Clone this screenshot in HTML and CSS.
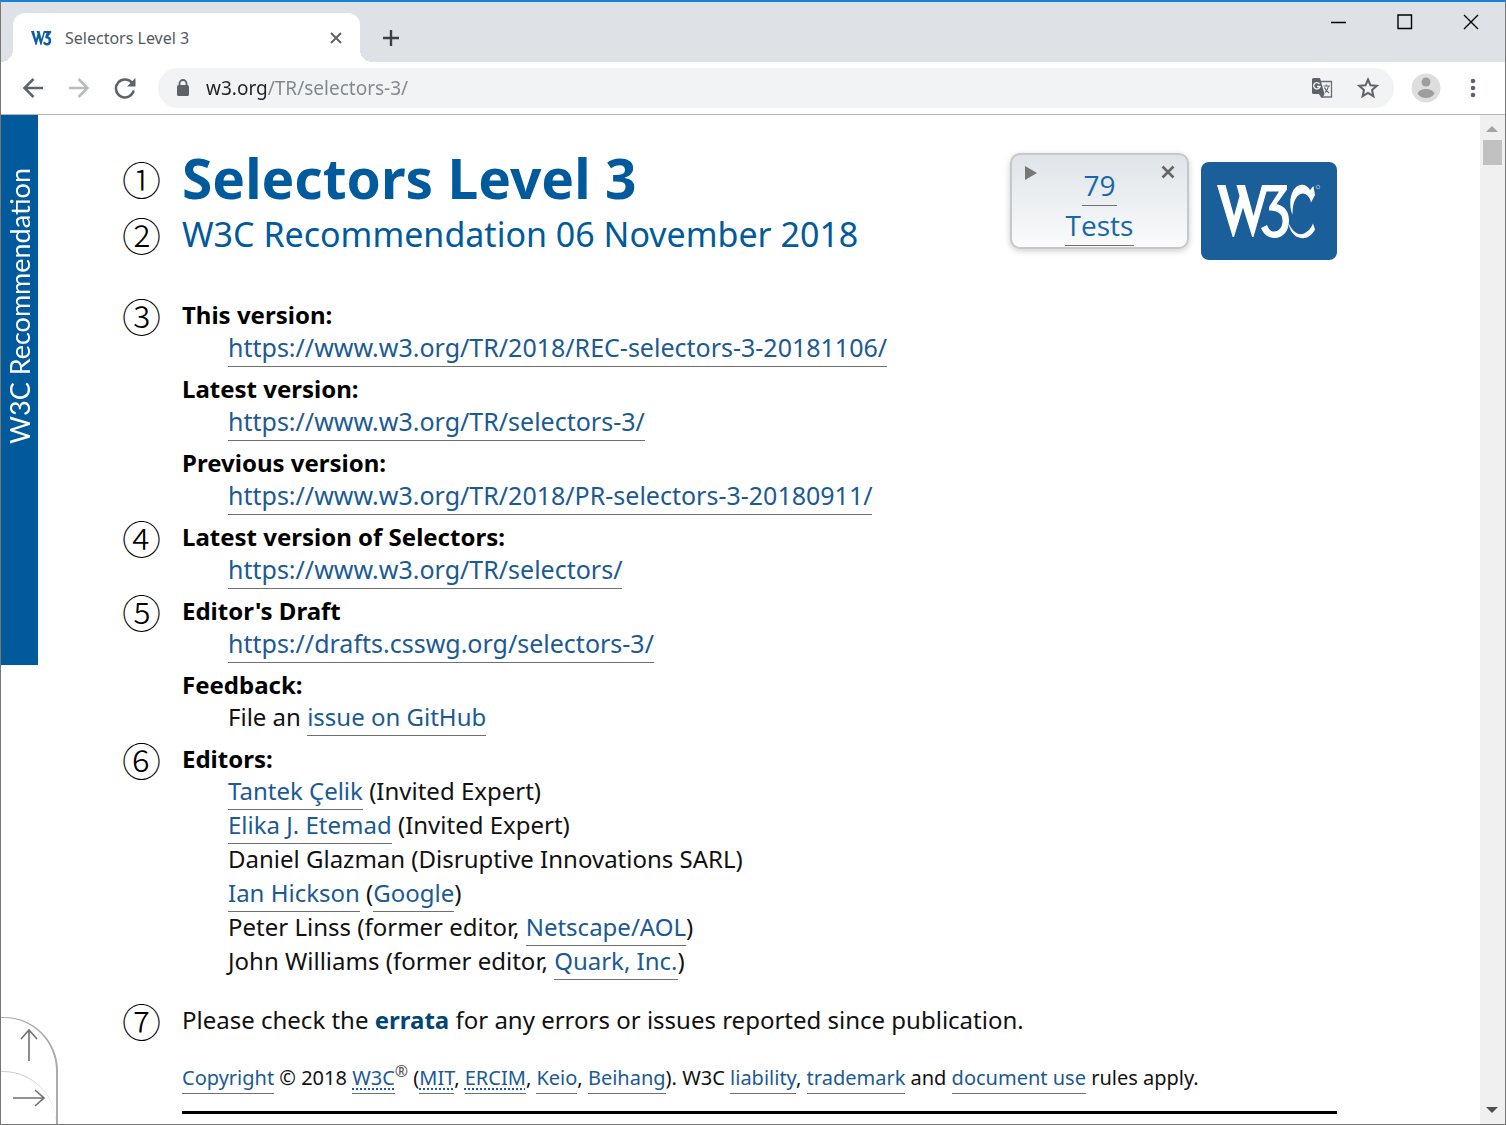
FILE: index.html
```html
<!DOCTYPE html>
<html lang="en">
<head>
<meta charset="utf-8">
<title>Selectors Level 3</title>
<link rel="stylesheet" href="styles.css">
</head>
<body>
<div class="window">
  <div class="titlebar">
    <div class="tab">
      <svg class="favicon" viewBox="0 0 22 16" width="22" height="16" aria-hidden="true"><path d="M0 1h3l2 8 1.500-5L5.500 1h3l2 8 2.200-8h7.500v1.500l-3 4c2 .6 3 2.200 3 4 0 3-1.500 5-4.200 5-1.900 0-3.200-1-4-2.800l1.900-1.200c.5 1.200 1.200 1.600 2 1.600 1.200 0 1.700-1 1.700-2.400 0-1.700-1-2.400-3.300-2.400V6.500L15.500 3h-1.700l-3.400 12h-.9L7.500 8l-2 7h-.9z"/></svg>
      <span class="tab-title">Selectors Level 3</span>
      <button class="plain" aria-label="Close tab"><svg width="14" height="14" viewBox="0 0 14 14"><path d="M2 2l10 10M12 2L2 12" stroke="#5f6368" stroke-width="2"/></svg></button>
    </div>
    <button class="plain new-tab" aria-label="New tab"><svg width="18" height="18" viewBox="0 0 18 18"><path d="M9 1v16M1 9h16" stroke="#3c4043" stroke-width="2.400"/></svg></button>
    <div class="window-controls">
      <button class="plain" aria-label="Minimize"><svg width="16" height="16" viewBox="0 0 16 16"><path d="M0 8.500h15" stroke="#000" stroke-width="1.500"/></svg></button>
      <button class="plain" aria-label="Maximize"><svg width="16" height="16" viewBox="0 0 16 16"><path d="M1 1h13.500v13.500H1z" fill="none" stroke="#000" stroke-width="1.400"/></svg></button>
      <button class="plain" aria-label="Close window"><svg width="16" height="16" viewBox="0 0 16 16"><path d="M1 1l14 14M15 1L1 15" stroke="#000" stroke-width="1.400"/></svg></button>
    </div>
  </div>

  <div class="toolbar">
    <div class="nav-buttons">
      <button class="plain" aria-label="Back"><svg width="22" height="22" viewBox="0 0 22 22"><path d="M21 11H3M11.500 2L2.500 11l9 9" fill="none" stroke="#5f6368" stroke-width="2.500"/></svg></button>
      <button class="plain" aria-label="Forward"><svg width="22" height="22" viewBox="0 0 22 22"><path d="M1 11h18M10.500 2l9 9-9 9" fill="none" stroke="#babcbe" stroke-width="2.500"/></svg></button>
      <button class="plain" aria-label="Reload"><svg width="22" height="22" viewBox="0 0 22 22"><path d="M18.500 6.500A9 9 0 1 0 19.700 13.500" fill="none" stroke="#5f6368" stroke-width="2.500"/><path d="M21.500 1v8.500H13z" fill="#5f6368"/></svg></button>
    </div>
    <div class="omnibox">
      <svg width="14" height="18" viewBox="0 0 14 18" aria-hidden="true"><path d="M3.500 7V4.500a3.500 3.500 0 0 1 7 0V7" fill="none" stroke="#5f6368" stroke-width="1.800"/><rect x="1" y="6" width="12" height="11" rx="1.500" fill="#5f6368"/></svg>
      <input class="address" type="text" aria-label="Address" value="w3.org/TR/selectors-3/">
      <button class="plain" aria-label="Translate this page"><svg width="22" height="22" viewBox="0 0 22 22"><path d="M9 4.500h11.500V20h-10L8 16" fill="none" stroke="#6d7175" stroke-width="1.300"/><path d="M2.500 1H9l4.500 16H2.500A1.500 1.500 0 0 1 1 15.500v-13A1.500 1.500 0 0 1 2.500 1z" fill="#5f6368"/><path d="M13.500 17H9l2.500 4z" fill="#5f6368"/><path d="M8.500 7A3.200 3.200 0 1 0 9 9.500H6" fill="none" stroke="#f1f3f4" stroke-width="1.400"/><path d="M12.500 9H19M15.500 7.500V9M17.500 9c-.5 3-2 5-3.500 6.500M13.500 10.500c1 2.500 2.500 4 4.500 5.500" fill="none" stroke="#6d7175" stroke-width="1.200"/></svg></button>
      <button class="plain" aria-label="Bookmark this page"><svg width="22" height="22" viewBox="0 0 22 22"><path d="M11 2.500l2.500 5.800 6.300.5-4.800 4.200 1.400 6.200L11 15.900l-5.400 3.300L7 13 2.200 8.800l6.300-.5z" fill="none" stroke="#5f6368" stroke-width="2"/></svg></button>
    </div>
    <button class="plain" aria-label="Profile"><svg width="30" height="30" viewBox="0 0 30 30"><circle cx="15" cy="15" r="14.500" fill="#dedede"/><circle cx="15" cy="9" r="4.500" fill="#9e9e9e"/><path d="M6.500 20.500C8 17 12 16 15 16s7 1 8.500 4.500c-2 3-5 4.500-8.500 4.500s-6.500-1.500-8.500-4.500z" fill="#9e9e9e"/></svg></button>
    <button class="plain" aria-label="Menu"><svg width="6" height="20" viewBox="0 0 6 20"><g fill="#5f6368"><circle cx="3" cy="3" r="2.300"/><circle cx="3" cy="10" r="2.300"/><circle cx="3" cy="17" r="2.300"/></g></svg></button>
  </div>

  <div class="viewport">
    <aside class="status-strip"><span class="status-text">W3C Recommendation</span></aside>
    <main class="document">
      <header class="head">
        <div class="titles">
          <div class="row"><span class="marker">①</span><h1>Selectors Level 3</h1></div>
          <div class="row"><span class="marker">②</span><p class="subtitle">W3C Recommendation 06 November 2018</p></div>
        </div>
        <div class="badges">
          <div class="tests">
            <button class="plain" aria-label="Expand"><svg width="14" height="16" viewBox="0 0 14 16"><path d="M1 1l12 7-12 7z" fill="#777"/></svg></button>
            <p class="tests-count"><a href="#">79</a><br><a href="#">Tests</a></p>
            <button class="plain" aria-label="Dismiss"><svg width="14" height="14" viewBox="0 0 14 14"><path d="M1.500 1.500l11 11M12.500 1.500l-11 11" stroke="#666" stroke-width="2.600"/></svg></button>
          </div>
          <a class="logo" href="#" aria-label="W3C"><svg width="136" height="98" viewBox="0 0 136 98"><rect width="136" height="98" rx="8" fill="#1a5e9a"/><g fill="#fff"><path d="M16 23h8.500l8.500 31 5.500-20-3-11H44l8.500 31L61 23h25v4.500L75.500 42C84 44 88 50 88 58.500 88 69 82 76 73.500 76c-6.500 0-11-4-13.500-10l6-3c1.500 4.500 4 6.500 7 6.500 5 0 8.500-4.500 8.500-10.500 0-7.500-5-10.500-13.500-10.500V45L78 29.500H65.500L52.500 75h-1.300L42 45.500 33 75h-1.300z"/><path d="M112.500 24l1.500 9-4 7.500c-1.500-7-6.500-11-11.500-8C93 36 91.500 44 91.500 53c-4-10-2.500-22 3-27.500 5-5 12-3 14.500 2.500zM87.500 61c4 9 10 13 15.500 10.500 4-2 7-5 9-10l2 6c-4 7.500-10 10-16 8-6-1.500-9.500-8-10.500-14.500z"/></g><circle cx="117" cy="25" r="1.800" fill="none" stroke="#8fb2d1"/></svg></a>
        </div>
      </header>

      <dl class="meta">
        <div class="group"><dt class="row"><span class="marker">③</span>This version:</dt><dd class="url"><a href="#">https://www.w3.org/TR/2018/REC-selectors-3-20181106/</a></dd></div>
        <div class="group"><dt class="row"><span class="marker"></span>Latest version:</dt><dd class="url"><a href="#">https://www.w3.org/TR/selectors-3/</a></dd></div>
        <div class="group"><dt class="row"><span class="marker"></span>Previous version:</dt><dd class="url"><a href="#">https://www.w3.org/TR/2018/PR-selectors-3-20180911/</a></dd></div>
        <div class="group"><dt class="row"><span class="marker">④</span>Latest version of Selectors:</dt><dd class="url"><a href="#">https://www.w3.org/TR/selectors/</a></dd></div>
        <div class="group"><dt class="row"><span class="marker">⑤</span>Editor's Draft</dt><dd class="url"><a href="#">https://drafts.csswg.org/selectors-3/</a></dd></div>
        <div class="group"><dt class="row"><span class="marker"></span>Feedback:</dt><dd>File an <a href="#">issue on GitHub</a></dd></div>
        <div class="group"><dt class="row"><span class="marker">⑥</span>Editors:</dt>
          <dd><a href="#">Tantek Çelik</a> (Invited Expert)</dd>
          <dd><a href="#">Elika J. Etemad</a> (Invited Expert)</dd>
          <dd>Daniel Glazman (Disruptive Innovations SARL)</dd>
          <dd><a href="#">Ian Hickson</a> (<a href="#">Google</a>)</dd>
          <dd>Peter Linss (former editor, <a href="#">Netscape/AOL</a>)</dd>
          <dd>John Williams (former editor, <a href="#">Quark, Inc.</a>)</dd>
        </div>
      </dl>

      <div class="row"><span class="marker">⑦</span><p>Please check the <a class="errata" href="#">errata</a> for any errors or issues reported since publication.</p></div>
      <p class="copyright"><a href="#">Copyright</a> © 2018 <a href="#"><abbr>W3C</abbr></a><sup>®</sup> (<a href="#"><abbr>MIT</abbr></a>, <a href="#"><abbr>ERCIM</abbr></a>, <a href="#">Keio</a>, <a href="#">Beihang</a>). W3C <a href="#">liability</a>, <a href="#">trademark</a> and <a href="#">document use</a> rules apply.</p>
      <hr class="rule">
    </main>
    <div class="scrollbar">
      <svg width="12" height="6" viewBox="0 0 12 6" aria-hidden="true"><path d="M6 0l6 6H0z" fill="#a3a3a3"/></svg>
      <div class="thumb"></div>
      <svg class="scroll-down" width="12" height="6" viewBox="0 0 12 6" aria-hidden="true"><path d="M0 0h12L6 6z" fill="#505050"/></svg>
    </div>
    <nav class="jump" aria-label="Page">
      <a class="jump-top" href="#" aria-label="Jump to top"><svg width="20" height="34" viewBox="0 0 20 34"><path d="M10 33V2M2 11l8-9 8 9" fill="none" stroke="#707070" stroke-width="1.600"/></svg></a>
      <a class="jump-side" href="#" aria-label="Toggle sidebar"><svg width="34" height="20" viewBox="0 0 34 20"><path d="M1 10h31M23 2l9 8-9 8" fill="none" stroke="#707070" stroke-width="1.600"/></svg></a>
    </nav>
  </div>
</div>
</body>
</html>
```
FILE: styles.css
```css
* {
  box-sizing: border-box;
}

body {
  margin: 0;
  background: #fff;
  color: #111;
  font-family: "Noto Sans", "Open Sans", sans-serif;
  font-size: 24px;
  line-height: 32px;
}

h1, p, dl, dd {
  margin: 0;
}

.plain {
  display: flex;
  padding: 0;
  border: 0;
  background: none;
}

.window {
  display: flex;
  flex-direction: column;
  height: 100vh;
  border: 1px solid #777;
  border-top: 2px solid #1a80d8;
  overflow: hidden;
}

/* Tab strip */
.titlebar {
  display: flex;
  height: 60px;
  flex: none;
  padding-left: 12px;
  background: #dee1e6;
}

.tab {
  position: relative;
  display: flex;
  align-items: center;
  gap: 12px;
  width: 347px;
  margin-top: 11px;
  padding: 0 17px 0 18px;
  border-radius: 12px 12px 0 0;
  background: #fff;
}

.tab::before,
.tab::after {
  content: "";
  position: absolute;
  bottom: 0;
  width: 12px;
  height: 12px;
}

.tab::before {
  right: 100%;
  background: radial-gradient(circle at 0 0, transparent 12px, #fff 12px);
}

.tab::after {
  left: 100%;
  background: radial-gradient(circle at 100% 0, transparent 12px, #fff 12px);
}

.favicon {
  fill: #0c5ea3;
}

.tab-title {
  flex: 1;
  color: #55595e;
  font-size: 16px;
}

.new-tab {
  align-items: center;
  margin: 11px 0 0 22px;
}

.window-controls {
  display: flex;
  gap: 50px;
  margin: 12px 26px 0 auto;
  align-items: flex-start;
}

/* Toolbar */
.toolbar {
  display: flex;
  flex: none;
  align-items: center;
  height: 53px;
  padding: 0 29px 0 21px;
  border-bottom: 1px solid #b5b5b5;
}

.nav-buttons {
  display: flex;
  gap: 24px;
  margin-right: 22px;
}

.omnibox {
  display: flex;
  flex: 1;
  align-items: center;
  gap: 24px;
  height: 40px;
  margin-right: 17px;
  padding: 0 15px 0 18px;
  border-radius: 20px;
  background: #f1f3f4;
}

.address {
  flex: 1;
  min-width: 0;
  margin-left: -8px;
  padding: 0;
  border: 0;
  background: linear-gradient(90deg, #202124 61px, #80868b 61px);
  background-clip: text;
  -webkit-background-clip: text;
  color: transparent;
  font-family: "Noto Sans", sans-serif;
  font-size: 19px;
}

.toolbar > .plain + .plain {
  margin-left: 29px;
}

/* Page area */
.viewport {
  position: relative;
  display: flex;
  flex: 1;
  min-height: 0;
  align-items: flex-start;
}

.status-strip {
  flex: none;
  width: 37px;
  padding: 53px 0 221px;
  background: #005a9c;
  color: #fff;
}

.status-text {
  display: block;
  width: 37px;
  font-family: Lato, sans-serif;
  font-size: 27px;
  line-height: 37px;
  white-space: nowrap;
  writing-mode: vertical-rl;
  transform: rotate(180deg);
}

.document {
  flex: 1;
  min-width: 0;
  padding: 35px 143px 0 84px;
}

.document a {
  padding-bottom: 2px;
  border-bottom: 1px solid #707070;
  color: #1b5a92;
  text-decoration: none;
}

.row {
  display: flex;
}

.marker {
  flex: none;
  width: 60px;
  color: #000;
  font-family: "Noto Sans CJK JP", sans-serif;
  font-size: 39px;
  font-weight: 300;
  line-height: inherit;
}

.head {
  display: flex;
  justify-content: space-between;
  color: #005a9c;
  line-height: 56px;
}

h1 {
  font-size: 55px;
  line-height: 56px;
}

.subtitle {
  font-size: 34px;
}

.badges {
  display: flex;
  align-items: flex-start;
  gap: 12px;
  padding-top: 3px;
}

.tests {
  display: flex;
  justify-content: space-between;
  align-items: flex-start;
  width: 179px;
  height: 96px;
  padding: 10px 12px;
  border: 2px solid #c3c8cb;
  border-radius: 10px;
  background: linear-gradient(#dfe4e8, #fafbfc);
  box-shadow: 0 2px 6px #0003;
}

.tests-count {
  font-family: "Open Sans", sans-serif;
  font-size: 28px;
  line-height: 40px;
  text-align: center;
}

.document .tests-count a {
  padding: 0 1px 1px;
  color: #1667ab;
}

.document .logo {
  display: flex;
  margin-top: 9px;
  padding: 0;
  border: 0;
}

/* Version list */
.meta {
  padding: 37px 0 27px;
}

.group + .group {
  margin-top: 10px;
}

dt {
  color: #000;
  font-weight: 700;
}

dd {
  padding-left: 106px;
}

dd + dd {
  margin-top: 2px;
}

.url {
  font-size: 25px;
}

.document .errata {
  border: 0;
  color: #034575;
  font-weight: 700;
}

.copyright {
  margin-top: 27px;
  padding-left: 60px;
  font-size: 20px;
  line-height: 30px;
}

.copyright abbr {
  text-decoration: underline dotted 2px;
  text-underline-offset: 3px;
}

.copyright sup {
  color: #555;
  font-size: 16px;
  line-height: 1px;
}

.rule {
  height: 3px;
  margin: 18px 0 0 60px;
  border: 0;
  background: #000;
}

/* Scrollbar */
.scrollbar {
  display: flex;
  flex: none;
  flex-direction: column;
  align-items: center;
  align-self: stretch;
  width: 25px;
  padding: 11px 1px 11px 0;
  background: #f0f0f0;
}

.thumb {
  width: 19px;
  height: 25px;
  margin-top: 8px;
  background: #c1c1c1;
}

.scroll-down {
  margin-top: auto;
}

/* Corner buttons laid over the page */
.jump {
  position: absolute;
  bottom: 0;
  left: 0;
  width: 57px;
  border: 2px solid #aaa;
  border-width: 1px 2px 0 0;
  border-radius: 0 54px 0 0;
  overflow: hidden;
  background: #fff;
}

.jump a {
  display: flex;
  justify-content: center;
  align-items: center;
  height: 53px;
}

.document + .scrollbar + .jump .jump-side {
  border-top: 1px solid #ccc;
  border-radius: 0 54px 0 0;
}
```
